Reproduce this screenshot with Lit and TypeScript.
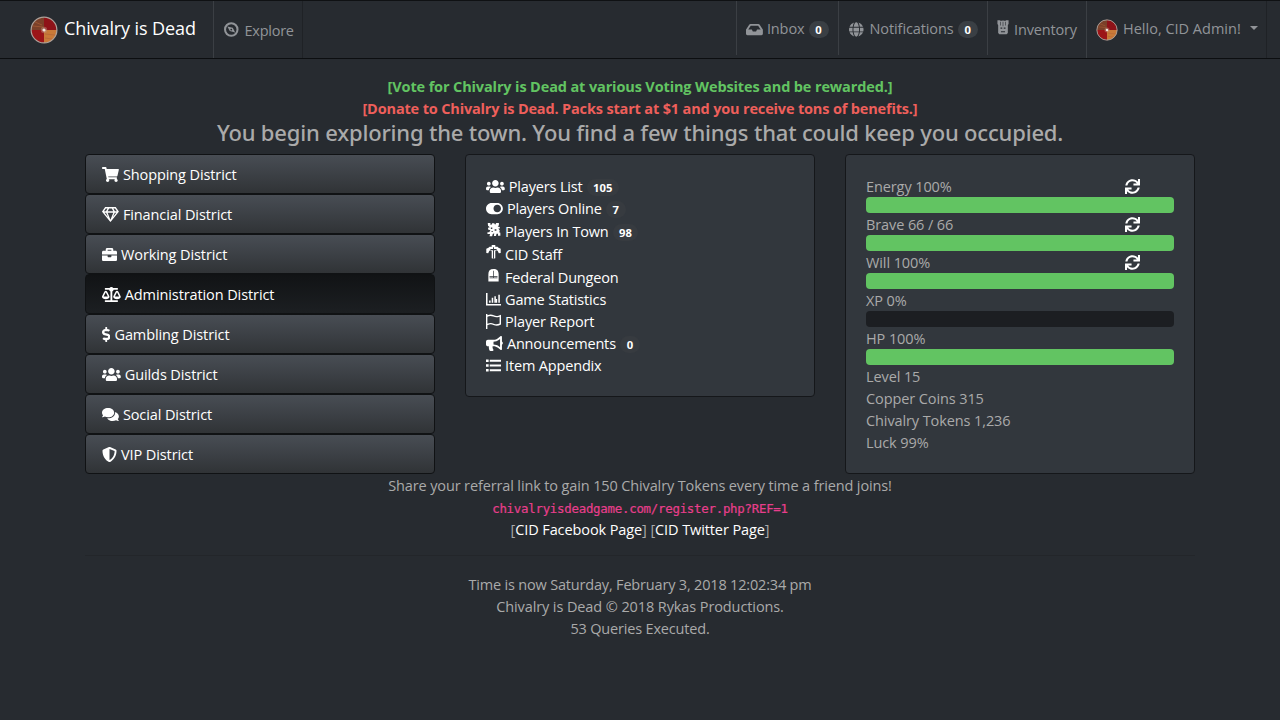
import { LitElement, html, svg, css, nothing } from "lit";
import { customElement } from "lit/decorators.js";
import { classMap } from "lit/directives/class-map.js";
import { styleMap } from "lit/directives/style-map.js";

const PATHS: Record<string, [number, string]> = {
  users: [640, "M96 224c35.3 0 64-28.7 64-64s-28.7-64-64-64-64 28.7-64 64 28.7 64 64 64zm448 0c35.3 0 64-28.7 64-64s-28.7-64-64-64-64 28.7-64 64 28.7 64 64 64zm32 32h-64c-17.6 0-33.5 7.1-45.1 18.6 40.3 22.1 68.9 62 75.1 109.4h66c17.7 0 32-14.3 32-32v-32c0-35.3-28.7-64-64-64zm-256 0c61.9 0 112-50.1 112-112S381.9 32 320 32 208 82.1 208 144s50.1 112 112 112zm76.8 32h-8.3c-20.8 10-43.9 16-68.5 16s-47.6-6-68.5-16h-8.3C179.6 288 128 339.6 128 403.2V432c0 26.5 21.5 48 48 48h288c26.5 0 48-21.5 48-48v-28.8c0-63.6-51.6-115.2-115.2-115.2zm-223.7-13.4C161.5 263.1 145.6 256 128 256H64c-35.3 0-64 28.7-64 64v32c0 17.7 14.3 32 32 32h65.9c6.3-47.4 34.9-87.3 75.2-109.4z"],
  cart: [576, "M528.12 301.319l47.273-208C578.806 78.301 567.391 64 551.99 64H159.208l-9.166-44.81C147.758 8.021 137.93 0 126.529 0H24C10.745 0 0 10.745 0 24v16c0 13.255 10.745 24 24 24h69.883l70.248 343.435C147.325 417.1 136 435.222 136 456c0 30.928 25.072 56 56 56s56-25.072 56-56c0-15.674-6.447-29.835-16.824-40h209.647C430.447 426.165 424 440.326 424 456c0 30.928 25.072 56 56 56s56-25.072 56-56c0-22.172-12.888-41.332-31.579-50.405l5.517-24.276c3.413-15.018-8.002-29.319-23.403-29.319H218.117l-6.545-32h293.145c11.206 0 20.92-7.754 23.403-18.681z"],
  gem: [576, "M464 0H112c-4 0-7.7 2-9.9 5.4L1.7 152.4c-2.9 4.2-2.1 10 1.4 13.5l276 340.1c4.8 5.9 13.8 5.9 18.6 0l276-340.1c3.1-3.8 3.3-9.3.6-13.5L473.9 5.4C471.7 2 468 0 464 0zm-19.3 48l63.3 96h-68.4l-51.7-96h56.8zm-202.1 0h90.7l51.7 96H191l51.6-96zm-111.3 0h56.8l-51.7 96H68l63.3-96zm-43 144h51.4L208 352 88.3 192zm102.9 0h193.6L288 435.3 191.2 192zM368 352l68.2-160h51.4L368 352z"],
  briefcase: [512, "M320 336c0 8.84-7.16 16-16 16h-96c-8.84 0-16-7.16-16-16v-48H0v144c0 25.6 22.4 48 48 48h416c25.6 0 48-22.4 48-48V288H320v48zm144-208h-80V80c0-25.6-22.4-48-48-48H176c-25.6 0-48 22.4-48 48v48H48c-25.6 0-48 22.4-48 48v80h512v-80c0-25.6-22.4-48-48-48zm-144 0H192V96h128v32z"],
  scale: [640, "M256 336h-.02c0-16.18 1.34-8.73-85.05-181.51-17.65-35.29-68.19-35.36-85.87 0C-2.06 328.75.02 320.33.02 336H0c0 44.18 57.31 80 128 80s128-35.82 128-80zM128 176l72 144H56l72-144zm511.98 160c0-16.18 1.34-8.73-85.05-181.51-17.65-35.29-68.19-35.36-85.87 0-87.12 174.26-85.04 165.84-85.04 181.51H384c0 44.18 57.31 80 128 80s128-35.82 128-80h-.02zM440 320l72-144 72 144H440zm88 128H352V153.25c23.51-10.29 41.16-31.48 46.39-57.25H528c8.84 0 16-7.16 16-16V48c0-8.84-7.16-16-16-16H383.64C369.04 12.68 346.09 0 320 0s-49.04 12.68-63.64 32H112c-8.84 0-16 7.16-16 16v32c0 8.84 7.16 16 16 16h129.61c5.23 25.76 22.87 46.96 46.39 57.25V448H112c-8.84 0-16 7.16-16 16v32c0 8.84 7.16 16 16 16h416c8.84 0 16-7.16 16-16v-32c0-8.84-7.16-16-16-16z"],
  dollar: [288, "M209.2 233.4l-108-31.6C88.7 198.2 80 186.5 80 173.5c0-16.3 13.2-29.5 29.5-29.5h66.3c12.2 0 24.2 3.7 34.2 10.5 6.1 4.1 14.3 3.1 19.5-2l34.8-34c7.1-6.9 6.1-18.4-1.8-24.5C238 74.8 207.4 64.1 176 64V16c0-8.8-7.2-16-16-16h-32c-8.8 0-16 7.2-16 16v48h-2.5C45.8 64-5.4 118.7.5 183.6c4.2 46.1 39.4 83.6 83.8 96.6l102.5 30c12.5 3.7 21.2 15.3 21.2 28.3 0 16.3-13.2 29.5-29.5 29.5h-66.3C100 368 88 364.3 78 357.5c-6.1-4.1-14.3-3.1-19.5 2l-34.8 34c-7.1 6.9-6.1 18.4 1.8 24.5 24.5 19.2 55.1 29.9 86.5 30v48c0 8.8 7.2 16 16 16h32c8.8 0 16-7.2 16-16v-48.2c46.6-.9 90.3-28.6 105.7-72.7 21.5-61.6-14.6-124.8-72.5-141.7z"],
  comments: [576, "M416 192c0-88.4-93.1-160-208-160S0 103.6 0 192c0 34.3 14.1 65.9 38 92-13.4 30.2-35.5 54.2-35.8 54.5-2.2 2.3-2.8 5.7-1.5 8.7S4.8 352 8 352c36.6 0 66.9-12.3 88.7-25 32.2 15.7 70.3 25 111.3 25 114.9 0 208-71.6 208-160zm122 220c23.9-26 38-57.7 38-92 0-66.9-53.5-124.2-129.3-148.1.9 6.6 1.3 13.3 1.3 20.1 0 105.9-107.7 192-240 192-10.8 0-21.3-.8-31.7-1.9C207.8 439.6 281.8 480 368 480c41 0 79.1-9.2 111.3-25 21.8 12.7 52.1 25 88.7 25 3.2 0 6.1-1.9 7.3-4.8 1.3-2.9.7-6.3-1.5-8.7-.3-.3-22.4-24.2-35.8-54.5z"],
  shield: [512, "M466.5 83.7l-192-80a48.15 48.15 0 0 0-36.9 0l-192 80C27.7 91.1 16 108.6 16 128c0 198.5 114.5 335.7 221.5 380.3 11.8 4.9 25.1 4.9 36.9 0C360.1 472.6 496 349.3 496 128c0-19.4-11.7-36.9-29.5-44.3zM256.1 446.3l-.1-381 175.9 73.3c-3.3 151.4-82.1 261.1-175.8 307.7z"],
  toggle: [576, "M384 64H192C86 64 0 150 0 256s86 192 192 192h192c106 0 192-86 192-192S490 64 384 64zm0 320c-70.8 0-128-57.3-128-128 0-70.8 57.3-128 128-128 70.8 0 128 57.3 128 128 0 70.8-57.3 128-128 128z"],
  town: [512, "M60 30h90v60h40l20-50h70l30 50 40-60h90v80l-40 40 70 20v50h-50l50 70-20 60 40 20v100h-80v-70h-50l-20 80h-70l10-100-50 30-20 80h-90l20-80H50v-60h60l40-70-80-20v-60l60-20-60-50zM165 190v50h50v-50zm130 60v45h60v-45zM190 310v35h40v-35z"],
  cross: [512, "M195 0h122v60h75l35 35 75 35v145l-65 10-40-85-45-10-35 20v240l-61 22-61-22V210l-35-20-45 10-40 85-65-10V130l75-35 35-35h75zM240 75v60h-90v40h90v290h32V175h90v-40h-90V75z"],
  helm: [512, "M256 30c120 0 175 65 175 180v250H81V210C81 95 136 30 256 30zM244 90v180H120v26h124v24H120v26h272v-26H268v-24h124v-26H268V90z"],
  chart: [512, "M0 32h52v380h460v52H0zM105 290h52v75h-52zM195 200h52v165h-52zM285 145h52v220h-52zM335 240h46v125h-46zM420 90h52v275h-52z"],
  flag: [512, "M0 0h48v45c70-30 140-35 220 0 75 32 140 25 244-22v335c-100 52-175 50-260 15-75-31-130-25-204 15v124H0zM48 92v245c75-32 140-38 215-6 70 30 125 30 201-6V90c-80 26-145 25-215-5-75-30-135-25-201 7z"],
  horn: [576, "M576 240c0-23.63-12.95-44.04-32-55.12V32.01C544 23.26 537.02 0 512 0c-7.12 0-14.19 2.38-19.98 7.02l-85.03 68.03C364.28 109.19 310.66 128 256 128H64c-35.35 0-64 28.65-64 64v96c0 35.35 28.65 64 64 64h33.7c-1.39 10.48-2.18 21.14-2.18 32 0 39.77 9.26 77.35 25.56 110.94 5.19 10.69 16.52 17.06 28.4 17.06h74.28c26.05 0 41.69-29.84 25.9-50.56-16.4-21.52-26.15-48.36-26.15-77.44 0-11.11 1.62-21.79 4.41-32H256c54.66 0 108.28 18.81 150.98 52.95l85.03 68.03a32.023 32.023 0 0 0 19.98 7.02c24.92 0 32-22.78 32-32V295.13C563.05 284.04 576 263.63 576 240zm-96 141.42l-33.05-26.44C392.95 311.78 325.12 288 256 288v-96c69.12 0 136.95-23.78 190.95-66.98L480 98.58v282.84z"],
  list: [512, "M0 50h90v90H0zM0 211h90v90H0zM0 372h90v90H0zM128 60h384v70H128zM128 221h384v70H128zM128 382h384v70H128z"],
  sync: [512, "M440.935 12.574l3.966 82.766C399.416 41.904 331.674 8 256 8 134.813 8 33.933 94.924 12.296 209.824 10.908 217.193 16.604 224 24.103 224h49.084c5.57 0 10.377-3.842 11.676-9.259C103.407 137.408 172.931 80 256 80c60.893 0 114.512 30.856 146.104 77.801l-101.53-4.865c-6.845-.328-12.574 5.133-12.574 11.986v47.411c0 6.627 5.373 12 12 12h200.333c6.627 0 12-5.373 12-12V12c0-6.627-5.373-12-12-12h-47.411c-6.853 0-12.315 5.729-11.987 12.574zM256 432c-60.895 0-114.517-30.858-146.109-77.805l101.868 4.871c6.845.327 12.573-5.134 12.573-11.986v-47.412c0-6.627-5.373-12-12-12H12c-6.627 0-12 5.373-12 12V500c0 6.627 5.373 12 12 12h47.385c6.863 0 12.328-5.745 11.985-12.599l-4.129-82.575C112.725 470.166 180.405 504 256 504c121.187 0 222.067-86.924 243.704-201.824 1.388-7.369-4.308-14.176-11.807-14.176h-49.084c-5.57 0-10.377 3.842-11.676 9.259C408.593 374.592 339.069 432 256 432z"],
  inbox: [576, "M567.938 243.908L462.25 85.374A48.003 48.003 0 0 0 422.311 64H153.689a48 48 0 0 0-39.938 21.374L8.062 243.908A47.994 47.994 0 0 0 0 270.533V400c0 26.51 21.49 48 48 48h480c26.51 0 48-21.49 48-48V270.533a47.994 47.994 0 0 0-8.062-26.625zM162.252 128h251.497l85.333 128H376l-32 64H232l-32-64H76.918l85.334-128z"],
  globe: [496, "M336.5 160C322 70.7 287.8 8 248 8s-74 62.7-88.5 152h177zM152 256c0 22.2 1.2 43.5 3.3 64h185.3c2.1-20.5 3.3-41.8 3.3-64s-1.2-43.5-3.3-64H155.3c-2.1 20.5-3.3 41.8-3.3 64zm324.7-96c-28.6-67.9-86.5-120.4-158-141.6 24.4 33.8 41.2 84.7 50 141.6h108zM177.2 18.4C105.8 39.6 47.8 92.1 19.3 160h108c8.7-56.9 25.5-107.8 49.9-141.6zM487.4 192H372.7c2.1 21 3.3 42.5 3.3 64s-1.2 43-3.3 64h114.6c5.5-20.5 8.6-41.8 8.6-64s-3.1-43.5-8.5-64zM120 256c0-21.5 1.2-43 3.3-64H8.6C3.2 212.5 0 233.8 0 256s3.2 43.5 8.6 64h114.6c-2-21-3.2-42.5-3.2-64zm39.5 96c14.5 89.3 48.7 152 88.5 152s74-62.7 88.5-152h-177zm159.3 141.6c71.4-21.2 129.4-73.7 158-141.6h-108c-8.8 56.9-25.6 107.8-50 141.6zM19.3 352c28.6 67.9 86.5 120.4 158 141.6-24.4-33.8-41.2-84.7-50-141.6h-108z"],
  compass: [496, "M248 8a248 248 0 1 0 0 496 248 248 0 0 0 0-496zm0 70a178 178 0 1 1 0 356 178 178 0 0 1 0-356zM115 150l185 50 82 160-185-50zM248 228a30 30 0 1 0 0 60 30 30 0 0 0 0-60z"],
  vest: [400, "M10 10h90l25 25h30V10h30v25h30V10h30v25h30l25-25h90v125l-25 35v270l-40 50H75l-40-50V170L10 135zM110 60v130h20V60zM190 60v150h20V60zM270 60v130h20V60zM115 255v40h60v-40zM225 255v40h60v-40zM130 385v30h140v-30z"],
};

const icon = (name: string, size = 15) => {
  const [w, d] = PATHS[name];
  return html`<svg class="icon" viewBox="0 0 ${w} 512" width=${(w / 512) * size} height=${size}><path fill="currentColor" fill-rule="evenodd" d=${d}></path></svg>`;
};

const emblem = (size: number) => html`<svg class="emblem" viewBox="0 0 28 28" width=${size} height=${size}>
  ${svg`<path d="M14 14V1A13 13 0 0 0 1 14z" fill="#7a4029"/><path d="M14 14V1a13 13 0 0 1 13 13z" fill="#8e1218"/><path d="M14 14h13a13 13 0 0 1-13 13z" fill="#c97a38"/><path d="M14 14v13A13 13 0 0 1 1 14z" fill="#9c1518"/><path d="M3 10l10 1M5 6l7 3M15 18l10 1M15 22l7 1" stroke="#b06238" stroke-width="1" opacity=".6"/>`}
  <circle cx="14" cy="14" r="12.9" fill="none" stroke="#ada19a" stroke-width="1.2"></circle>
  <circle cx="14" cy="14" r="3.2" fill="#b98a76" opacity=".5"></circle>
  <circle cx="14" cy="14" r="1.6" fill="#f0e6e0"></circle>
</svg>`;

const DISTRICTS: [string, string, boolean?][] = [
  ["cart", "Shopping District"],
  ["gem", "Financial District"],
  ["briefcase", "Working District"],
  ["scale", "Administration District", true],
  ["dollar", "Gambling District"],
  ["users", "Guilds District"],
  ["comments", "Social District"],
  ["shield", "VIP District"],
];

const LINKS: [string, string, string?][] = [
  ["users", "Players List", "105"],
  ["toggle", "Players Online", "7"],
  ["town", "Players In Town", "98"],
  ["cross", "CID Staff"],
  ["helm", "Federal Dungeon"],
  ["chart", "Game Statistics"],
  ["flag", "Player Report"],
  ["horn", "Announcements", "0"],
  ["list", "Item Appendix"],
];

const BARS: [string, number, boolean][] = [
  ["Energy 100%", 100, true],
  ["Brave 66 / 66", 100, true],
  ["Will 100%", 100, true],
  ["XP 0%", 0, false],
  ["HP 100%", 100, false],
];

@customElement("app-root")
export class AppRoot extends LitElement {
  static styles = css`
    :host { display: block; box-sizing: border-box; height: 720px; overflow: hidden; background: #272b30; color: #aaa; font: 14.5px/22px "Open Sans", "Noto Sans", sans-serif; letter-spacing: -0.1px; }
    * { box-sizing: border-box; }
    a { color: #fff; text-decoration: none; }
    svg { display: block; flex: none; }
    nav { height: 59px; display: flex; border-top: 1px solid #0f1113; border-bottom: 1px solid #0c0e10; padding: 0 13px 0 30px; color: #919498; }
    nav a { color: inherit; }
    nav > * { display: flex; align-items: center; height: 57px; white-space: nowrap; }
    nav .brand { width: 183px; gap: 6px; padding-bottom: 3px; color: #fff; font-size: 18px; letter-spacing: -0.1px; }
    .brand .emblem { margin-top: 3px; }
    .sep { border-left: 1px solid #3b3f44; }
    .explore { width: 90px; padding: 3px 0 0 10px; gap: 6px; border-right: 1px solid #1f2226; letter-spacing: -0.25px; }
    .explore .icon { margin-top: -3px; }
    .right { margin-left: auto; }
    .inbox { width: 102px; padding: 2px 0 0 9px; gap: 4px; height: 54px; }
    .notes { width: 149px; padding: 2px 0 0 10px; gap: 6px; height: 54px; }
    .notes .badge { margin-left: -2px; }
    .inv { width: 99px; padding: 4px 0 0 8px; gap: 4px; height: 54px; letter-spacing: -0.15px; }
    .inv .icon { width: 14px; margin-top: -5px; }
    .user { width: 181px; padding: 0 0 1px 9px; gap: 5px; border-right: 1px solid #1f2226; letter-spacing: 0; }
    .user .emblem { margin-top: 2px; }
    .caret { margin: -2px 0 0 4px; border: 4.5px solid transparent; border-top-color: currentColor; border-bottom: 0; }
    .badge { display: inline-block; height: 17px; min-width: 20px; padding: 0 6.5px; border-radius: 9px; background: #3a3f44; color: #fff; font-weight: 700; font-size: 11.25px; line-height: 17px; letter-spacing: 0; text-align: center; margin-top: 1px; }
    main { width: 1110px; margin: 0 auto; padding-top: 17px; text-align: center; }
    .vote, .donate { font-weight: 700; }
    .vote { color: #62c462; letter-spacing: -0.13px; }
    .donate { color: #ee5f5b; letter-spacing: -0.16px; }
    h4 { margin: 0 0 9px; font: 500 22px/25px "Noto Sans", "Open Sans", sans-serif; letter-spacing: -0.18px; }
    .cols { display: grid; grid-template-columns: repeat(3, 350px); gap: 30px; align-items: start; text-align: left; }
    .district { height: 40px; display: flex; align-items: center; gap: 4px; padding: 0 16px; border: 1px solid #101214; border-radius: 4px; background: linear-gradient(#484d54, #3b3f44 55%, #303336); }
    .district span, .link > span:first-of-type, .stat > span { padding-top: 2px; }
    .district.active { background: linear-gradient(#111315, #1c1f22); }
    .card { padding: 20px; border: 1px solid #15171a; border-radius: 4px; background: #32373d; }
    .link { display: flex; align-items: center; gap: 4px; height: 22px; white-space: nowrap; letter-spacing: -0.16px; }
    .link:nth-child(n + 3):nth-child(-n + 5) { height: 23px; }
    .link:nth-child(n + 3):nth-child(-n + 5) .icon { margin-top: -2px; }
    .link .badge { background: #373b40; margin: 3px 0 0 0; }
    .stat { display: flex; justify-content: space-between; align-items: center; height: 22px; padding-right: 34px; }
    .stat a { margin-top: 1px; }
    .track { height: 16px; border-radius: 4px; background: #1c1e22; overflow: hidden; }
    .fill { height: 100%; background: #62c462; }
    .share { letter-spacing: -0.13px; padding-top: 1px; }
    .ref { padding-top: 1px; height: 22px; font: 400 12.4px/22px "DejaVu Sans Mono", monospace; color: #e83e8c; letter-spacing: -0.25px; -webkit-text-stroke: 0.2px #e83e8c; }
    hr { height: 1px; margin: 14px 0 18px; border: 0; background: #23262a; }
    .time { letter-spacing: -0.18px; }
    .queries { letter-spacing: -0.18px; }
  `;

  render() {
    return html`
      <nav>
        <a class="brand">${emblem(28)}<span>Chivalry is Dead</span></a>
        <a class="explore sep">${icon("compass")}<span>Explore</span></a>
        <a class="inbox sep right">${icon("inbox")}<span>Inbox</span><span class="badge">0</span></a>
        <a class="notes sep">${icon("globe")}<span>Notifications</span><span class="badge">0</span></a>
        <a class="inv sep">${icon("vest")}<span>Inventory</span></a>
        <a class="user sep">${emblem(22)}<span>Hello, CID Admin!</span><span class="caret"></span></a>
      </nav>
      <main>
        <div class="vote">[Vote for Chivalry is Dead at various Voting Websites and be rewarded.]</div>
        <div class="donate">[Donate to Chivalry is Dead. Packs start at $1 and you receive tons of benefits.]</div>
        <h4>You begin exploring the town. You find a few things that could keep you occupied.</h4>
        <div class="cols">
          <div>
            ${DISTRICTS.map(([i, t, active]) => html`<a class=${classMap({ district: true, active: !!active })}>${icon(i)}<span>${t}</span></a>`)}
          </div>
          <div class="card">
            ${LINKS.map(([i, t, n]) => html`<a class="link">${icon(i)}<span>${t}</span>${n ? html`<span class="badge">${n}</span>` : nothing}</a>`)}
          </div>
          <div class="card">
            ${BARS.map(([t, pct, refill]) => html`
              <div class="stat"><span>${t}</span>${refill ? html`<a>${icon("sync")}</a>` : nothing}</div>
              <div class="track"><div class="fill" style=${styleMap({ width: `${pct}%` })}></div></div>`)}
            ${["Level 15", "Copper Coins 315", "Chivalry Tokens 1,236", "Luck 99%"].map((t) => html`<div class="stat"><span>${t}</span></div>`)}
          </div>
        </div>
        <div class="share">Share your referral link to gain 150 Chivalry Tokens every time a friend joins!</div>
        <div class="ref">chivalryisdeadgame.com/register.php?REF=1</div>
        <div>[<a>CID Facebook Page</a>] [<a>CID Twitter Page</a>]</div>
        <hr />
        <div class="time">Time is now Saturday, February 3, 2018 12:02:34 pm</div>
        <div>Chivalry is Dead © 2018 Rykas Productions.</div>
        <div class="queries">53 Queries Executed.</div>
      </main>
    `;
  }
}
